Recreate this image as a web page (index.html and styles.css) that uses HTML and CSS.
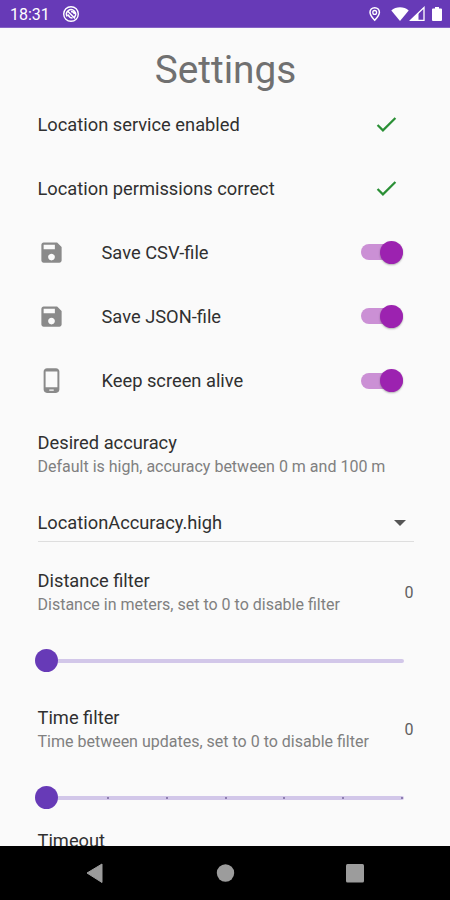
FILE: index.html
```html
<!DOCTYPE html>
<html lang="en">
<head>
<meta charset="utf-8">
<title>Settings</title>
<link rel="stylesheet" href="styles.css">
</head>
<body>
<header class="status">
  <span class="clock">18:31</span>
  <svg class="app-icon" width="18" height="18" viewBox="0 0 18 18"><circle cx="9" cy="9" r="7.3" fill="none" stroke="#fff" stroke-width="1.4"/><path d="M5.200 11.500A4.500 4.500 0 1 1 12.500 12M5.500 6l7.500 7.500M6 9.500c1 2.500 2.500 3.500 4.500 3.500M9 6.500c2 0 3 1 3.500 2.500" fill="none" stroke="#fff" stroke-width="1.500"/></svg>
  <svg class="status-right" width="76" height="18" viewBox="0 0 76 18"><path d="M7.7 2.7C4.8 2.7 3 4.800 3 7.300c0 3.200 4.700 8 4.700 8s4.700-4.800 4.700-8c0-2.500-1.800-4.600-4.700-4.600z" fill="none" stroke="#fff" stroke-width="1.500"/><circle cx="7.700" cy="7.400" r="1.900" fill="none" stroke="#fff" stroke-width="1.300"/><path d="M24.300 5.500C29 1.300 37 1.300 41.700 5.500L33 16z" fill="#fff"/><path d="M43.700 15.300L57 2.500v12.800z" fill="none" stroke="#fff" stroke-width="1.300"/><path d="M43 16L51.500 7.800V16z" fill="#fff"/><path d="M66 3.500h2V2h4v1.500h2a1 1 0 0 1 1 1V15a1 1 0 0 1-1 1h-8a1 1 0 0 1-1-1V4.500a1 1 0 0 1 1-1z" fill="#fff"/></svg>
</header>
<main class="content">
  <h1 class="heading">Settings</h1>
  <div class="row"><span class="title">Location service enabled</span><svg class="check" viewBox="0 0 24 24"><path d="M9 16.170L4.830 12l-1.420 1.410L9 19 21 7l-1.410-1.410z"/></svg></div>
  <div class="row"><span class="title">Location permissions correct</span><svg class="check" viewBox="0 0 24 24"><path d="M9 16.170L4.830 12l-1.420 1.410L9 19 21 7l-1.410-1.410z"/></svg></div>
  <div class="row"><svg class="lead" viewBox="0 0 24 24"><path d="M17 3H5c-1.110 0-2 .9-2 2v14c0 1.100.89 2 2 2h14c1.100 0 2-.9 2-2V7l-4-4zm-5 16c-1.660 0-3-1.340-3-3s1.340-3 3-3 3 1.340 3 3-1.340 3-3 3zm3-10H5V5h10v4z"/></svg><span class="title">Save CSV-file</span><span class="switch"><span class="thumb"></span></span></div>
  <div class="row"><svg class="lead" viewBox="0 0 24 24"><path d="M17 3H5c-1.110 0-2 .9-2 2v14c0 1.100.89 2 2 2h14c1.100 0 2-.9 2-2V7l-4-4zm-5 16c-1.660 0-3-1.340-3-3s1.340-3 3-3 3 1.340 3 3-1.340 3-3 3zm3-10H5V5h10v4z"/></svg><span class="title">Save JSON-file</span><span class="switch"><span class="thumb"></span></span></div>
  <div class="row"><svg class="lead" viewBox="0 0 24 24"><path fill-rule="evenodd" d="M16 1H8C6.340 1 5 2.340 5 4v16c0 1.660 1.340 3 3 3h8c1.660 0 3-1.340 3-3V4c0-1.660-1.340-3-3-3zm-2 20h-4v-1h4v1zm3.250-3H6.750V4h10.500v14z"/></svg><span class="title">Keep screen alive</span><span class="switch"><span class="thumb"></span></span></div>
  <section class="tile">
    <div><div class="title">Desired accuracy</div><div class="sub">Default is high, accuracy between 0 m and 100 m</div></div>
  </section>
  <div class="select"><span class="title">LocationAccuracy.high</span><svg width="12" height="6" viewBox="0 0 12 6"><path d="M0 0h12L6 6z" fill="#555"/></svg></div>
  <section class="tile">
    <div><div class="title">Distance filter</div><div class="sub">Distance in meters, set to 0 to disable filter</div></div><span class="value">0</span>
  </section>
  <div class="slider"><span class="knob"></span><span class="track"></span></div>
  <section class="tile">
    <div><div class="title">Time filter</div><div class="sub">Time between updates, set to 0 to disable filter</div></div><span class="value">0</span>
  </section>
  <div class="slider"><span class="knob"></span><span class="track ticks"><i></i><i></i><i></i><i></i><i></i><i></i></span></div>
  <div class="title last">Timeout</div>
</main>
<nav class="nav">
  <svg width="450" height="54" viewBox="0 0 450 54"><path d="M87 27L102 18v18.500z" fill="#9c9c9c" stroke="#9c9c9c" stroke-linejoin="round"/><circle cx="225.500" cy="27" r="8.700" fill="#9c9c9c"/><rect x="346" y="18" width="18" height="18.500" rx="1.500" fill="#9c9c9c"/></svg>
</nav>
</body>
</html>
```
FILE: styles.css
```css
* { box-sizing: border-box; }
body {
  margin: 0;
  width: 450px;
  height: 900px;
  display: flex;
  flex-direction: column;
  overflow: hidden;
  background: #fafafa;
  font-family: Roboto, sans-serif;
  color: #303030;
}
.status {
  height: 28px;
  flex: none;
  display: flex;
  align-items: center;
  padding: 1px 7px 0 10px;
  background: #673ab7;
  border-bottom: 1px solid #8562c5;
  color: #fff;
}
.clock { font-size: 16px; line-height: 20px; width: 52px; padding-top: 2px; }
.status-right { margin-left: auto; }
.content { flex: 1; min-height: 0; overflow: hidden; }
.heading {
  margin: 0;
  height: 64px;
  padding: 19px 0 0 1px;
  text-align: center;
  font-size: 38.800px;
  line-height: 46px;
  font-weight: 400;
  color: #707070;
}
.row {
  height: 64.150px;
  display: flex;
  align-items: center;
  padding: 0 47px 0 37.500px;
}
.title { font-size: 18.300px; line-height: 24px; }
.row .title { padding-top: 1.500px; }
.check { width: 26.500px; height: 26.500px; margin: 0 4px 0 auto; fill: #2a8f35; }
.lead { width: 27px; height: 27px; margin-right: 37px; fill: #8a8a8a; }
.switch {
  width: 42px;
  height: 16px;
  margin-left: auto;
  border-radius: 8px;
  background: #cb90d5;
  display: flex;
  align-items: center;
  justify-content: flex-end;
}
.thumb {
  width: 23px;
  height: 23px;
  flex: none;
  border-radius: 50%;
  background: #9c22b0;
  box-shadow: 0 1px 2px rgba(0, 0, 0, 0.3);
}
.tile {
  height: 82px;
  display: flex;
  align-items: center;
  justify-content: space-between;
  padding: 2px 36.500px 0 37.500px;
}
.sub { font-size: 16px; line-height: 24px; color: #808080; }
.value { font-size: 16px; color: #606060; padding-bottom: 2px; }
.select {
  height: 37px;
  margin: 10px 36px 9.500px 37.500px;
  padding-right: 8px;
  display: flex;
  align-items: center;
  justify-content: space-between;
  border-bottom: 1px solid #dedede;
}
.slider { height: 55.200px; display: flex; align-items: center; padding: 0 46px 0 35px; }
.knob { width: 23px; height: 23px; flex: none; border-radius: 50%; background: #673ab7; }
.track { flex: 1; height: 4.500px; background: #d2c7e9; border-radius: 0 2px 2px 0; }
.ticks { display: flex; align-items: center; justify-content: space-between; padding: 0 1px 0 49px; }
.ticks i { width: 2px; height: 2px; border-radius: 50%; background: #76649c; }
.last { padding: 3px 0 0 37.500px; }
.nav { height: 54.500px; flex: none; background: #000; }
.nav svg { display: block; }
```
